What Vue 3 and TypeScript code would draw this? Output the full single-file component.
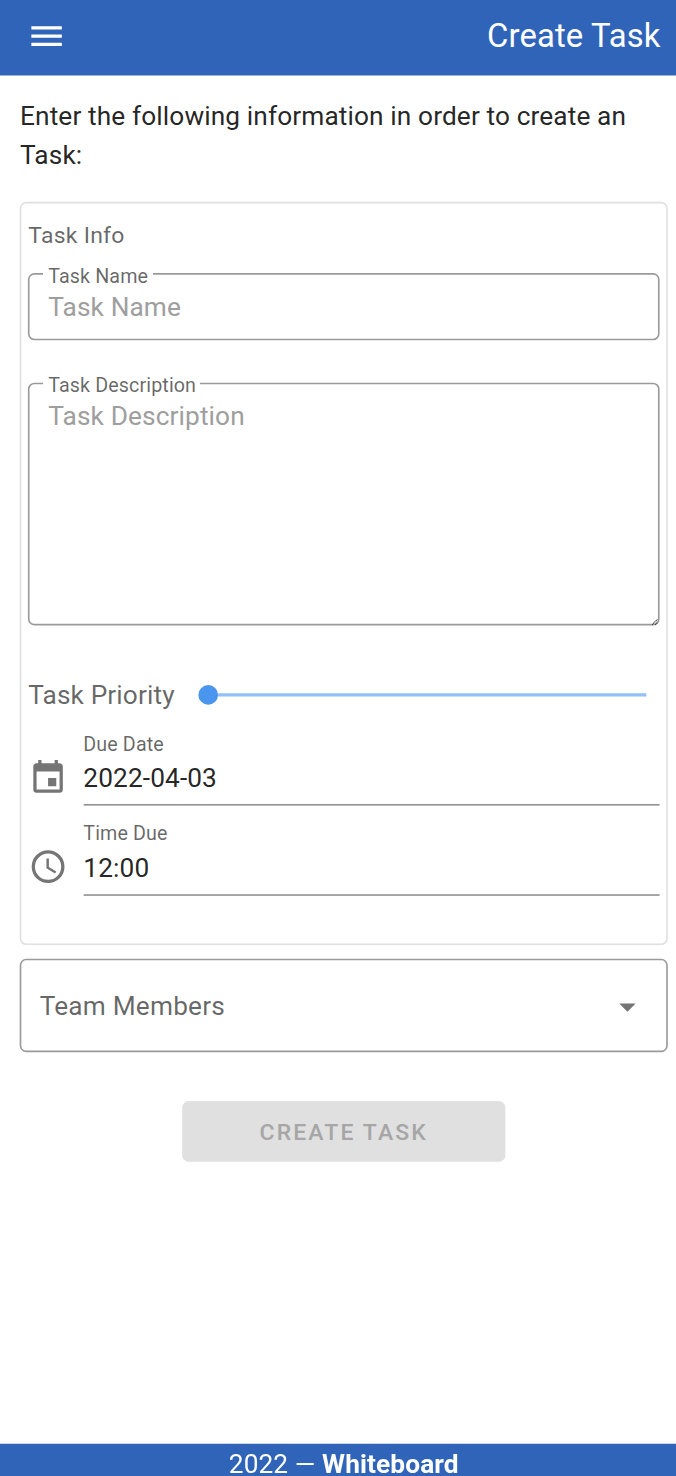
<script setup lang="ts">
import { ref } from 'vue'

interface PickerField {
  id: string
  label: string
  value: string
  icon: string
}

const taskName = ref('')
const taskDescription = ref('')

const pickers = ref<PickerField[]>([
  {
    id: 'date',
    label: 'Due Date',
    value: '2022-04-03',
    icon: 'M19,19H5V8H19M16,1V3H8V1H6V3H5C3.89,3 3,3.89 3,5V19A2,2 0 0,0 5,21H19A2,2 0 0,0 21,19V5C21,3.89 20.1,3 19,3H18V1M17,12H12V17H17V12Z',
  },
  {
    id: 'time',
    label: 'Time Due',
    value: '12:00',
    icon: 'M12,20A8,8 0 0,0 20,12A8,8 0 0,0 12,4A8,8 0 0,0 4,12A8,8 0 0,0 12,20M12,2A10,10 0 0,1 22,12A10,10 0 0,1 12,22C6.47,22 2,17.5 2,12A10,10 0 0,1 12,2M12.5,7V12.25L17,14.92L16.25,16.15L11,13V7H12.5Z',
  },
])
</script>

<template>
  <div class="screen">
    <div class="page">
      <header class="bar">
        <svg class="menu" viewBox="0 0 24 24" preserveAspectRatio="none">
          <path d="M3,6H21V8H3V6M3,11H21V13H3V11M3,16H21V18H3V16Z" />
        </svg>
        <h1 class="title">Create Task</h1>
      </header>

      <main class="content">
        <p class="intro">Enter the following information in order to create an Task:</p>

        <section class="card">
          <h2 class="card-title">Task Info</h2>

          <fieldset class="outlined name">
            <legend>Task Name</legend>
            <input v-model="taskName" class="control" placeholder="Task Name" />
          </fieldset>

          <fieldset class="outlined description">
            <legend>Task Description</legend>
            <textarea v-model="taskDescription" class="control" placeholder="Task Description"></textarea>
            <svg class="grip" viewBox="0 0 4 4">
              <path d="M0.3,3.7L3.7,0.3M2.3,3.7L3.7,2.3" />
            </svg>
          </fieldset>

          <div class="priority">
            <span class="priority-label">Task Priority</span>
            <div class="slider">
              <span class="thumb"></span>
              <span class="track"></span>
            </div>
          </div>

          <div v-for="field in pickers" :key="field.id" class="picker" :class="field.id">
            <svg class="picker-icon" viewBox="0 0 24 24"><path :d="field.icon" /></svg>
            <div class="picker-body">
              <span class="picker-label">{{ field.label }}</span>
              <span class="picker-value">{{ field.value }}</span>
            </div>
          </div>
        </section>

        <div class="select">
          <span class="select-label">Team Members</span>
          <svg class="caret" viewBox="0 0 24 24"><path d="M7,10L12,15L17,10H7Z" /></svg>
        </div>

        <button class="submit" disabled>Create Task</button>
      </main>

      <footer class="footer">2022 — <strong>Whiteboard</strong></footer>
    </div>
  </div>
</template>

<style>
body {
  background: #fff;
}
</style>

<style scoped>
.screen {
  width: 676px;
  height: 1476px;
  overflow: hidden;
}

.page {
  width: 412px;
  height: 899.6px;
  transform: scale(1.6408);
  transform-origin: 0 0;
  display: flex;
  flex-direction: column;
  background: #fff;
  color: rgba(0, 0, 0, 0.87);
  font-family: Roboto, 'Liberation Sans', sans-serif;
  font-size: 16px;
  letter-spacing: 0.07px;
}

.page *,
.page {
  box-sizing: border-box;
}

.bar {
  flex: none;
  height: 46px;
  padding: 0 9.4px 2.4px 15.8px;
  display: flex;
  align-items: center;
  justify-content: space-between;
  background: #2f64b9;
  color: #fff;
}

.menu {
  width: 24.8px;
  height: 24px;
  fill: #fff;
}

.title {
  margin: -1px 0 0;
  font-size: 20px;
  line-height: 24px;
  font-weight: 400;
  transform: translateY(0.6px);
}

.content {
  flex: 1;
  display: flex;
  flex-direction: column;
  padding: 12.7px 5.2px 0 12.2px;
}

.intro {
  margin: 0;
  line-height: 24px;
}

.card {
  flex: none;
  height: 452.8px;
  margin-top: 16.5px;
  border: 1px solid #e0e0e0;
  border-radius: 4px;
  padding: 8px 4px 0;
  color: rgba(0, 0, 0, 0.6);
}

.card-title {
  margin: 0;
  font-size: 14px;
  line-height: 22px;
  font-weight: 400;
  letter-spacing: 0.16px;
}

.outlined {
  position: relative;
  margin: 0;
  padding: 0 0 0 11.2px;
  min-width: 0;
  border: 1px solid #9a9a9a;
  border-radius: 4px;
  transform: translateY(0.2px);
}

.outlined legend {
  margin-left: -3.2px;
  padding: 0 2.8px 0 3.2px;
  height: 12px;
  font-size: 12px;
  line-height: 14.5px;
}

.outlined.name {
  height: 46.2px;
  margin-top: 6.6px;
  transform: translateY(0.4px);
}

.description {
  height: 153.3px;
  margin-top: 20.9px;
}

.control {
  display: block;
  width: 100%;
  height: 24px;
  margin: 2.2px 0 0;
  padding: 0;
  border: 0;
  outline: 0;
  resize: none;
  background: transparent;
  font: inherit;
  letter-spacing: inherit;
  line-height: 24px;
}

.description .control {
  height: 130px;
}

.control::placeholder {
  color: #9e9e9e;
  opacity: 1;
}

.grip {
  position: absolute;
  right: -0.5px;
  bottom: -0.5px;
  width: 4px;
  height: 4px;
  stroke: #444;
  stroke-width: 0.7;
  stroke-dasharray: 0.8 0.3;
}

.priority {
  display: flex;
  align-items: center;
  height: 24px;
  margin-top: 30.5px;
}

.slider {
  flex: 1;
  display: flex;
  align-items: center;
  margin: 0.4px 8px 0 14.4px;
  transform: translate(-0.1px, -0.5px);
}

.thumb {
  width: 12px;
  height: 12px;
  border-radius: 50%;
  background: #4a95ed;
}

.track {
  flex: 1;
  height: 2px;
  background: #93c0f7;
}

.picker {
  display: flex;
  height: 54.6px;
}

.date {
  margin-top: 9.4px;
}

.picker-icon {
  width: 24px;
  height: 24px;
  margin: 16.7px 0 0 0.2px;
  fill: #757575;
  transform: translate(0.3px, 0.2px);
}

.picker-body {
  flex: 1;
  display: flex;
  flex-direction: column;
  height: 46.2px;
  margin-left: 9.4px;
  border-bottom: 1px solid #949494;
}

.picker-label {
  font-size: 12px;
  line-height: 18px;
}

.time .picker-label {
  margin-top: -0.8px;
  margin-bottom: 0.8px;
}

.picker-value {
  margin-top: -1px;
  line-height: 26px;
  color: rgba(0, 0, 0, 0.87);
  transform: translateY(-0.6px);
}

.select {
  flex: none;
  display: flex;
  align-items: center;
  justify-content: space-between;
  height: 56.5px;
  margin-top: 8.4px;
  padding: 0 11px;
  border: 1px solid #9a9a9a;
  border-radius: 4px;
  color: rgba(0, 0, 0, 0.6);
  transform: translateY(0.3px);
}

.select-label {
  letter-spacing: 0.11px;
}

.caret {
  width: 24px;
  height: 24px;
  fill: #757575;
  transform: translate(-0.6px, 0.3px);
}

.submit {
  flex: none;
  align-self: center;
  width: 197.2px;
  height: 36.3px;
  margin-top: 30.6px;
  border: 0;
  border-radius: 4px;
  background: #e0e0e0;
  color: #a6a6a6;
  font-family: inherit;
  font-size: 14px;
  font-weight: 500;
  letter-spacing: 1.3px;
  text-transform: uppercase;
}

.footer {
  flex: none;
  height: 21px;
  padding-left: 7px;
  line-height: 25px;
  text-align: center;
  white-space: nowrap;
  background: #2f64b9;
  color: #fff;
  transform: translateY(0.9px);
}
</style>
